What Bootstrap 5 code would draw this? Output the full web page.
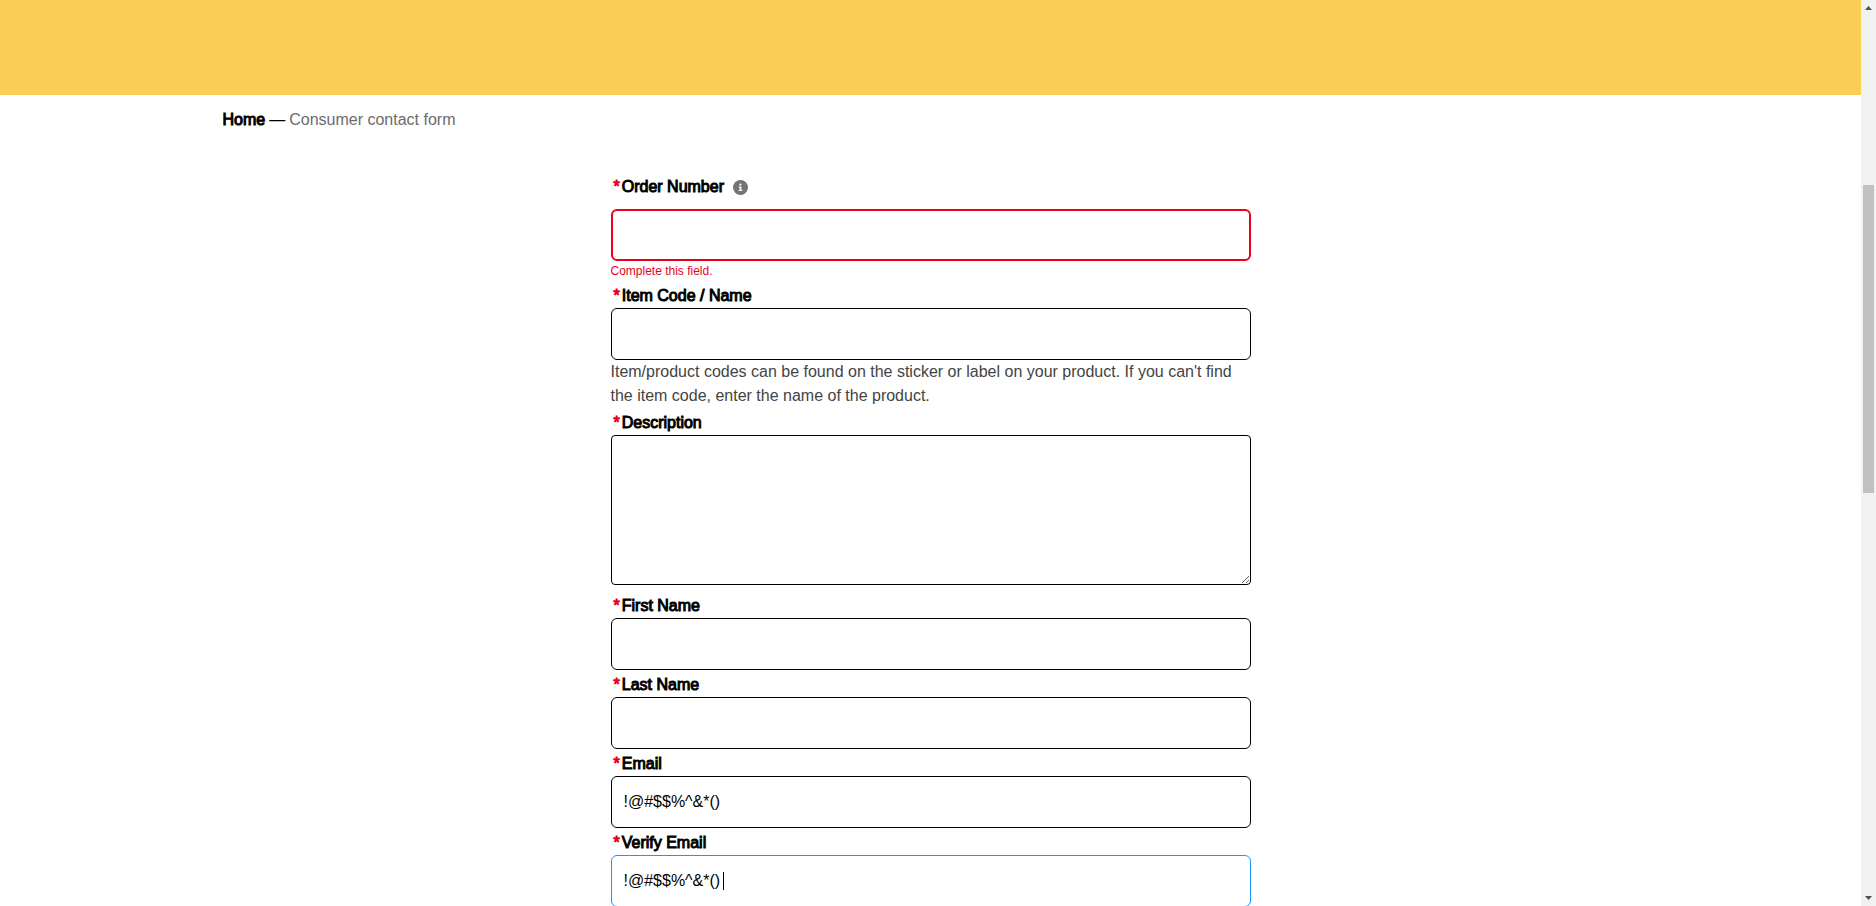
<!DOCTYPE html>
<html lang="en">
<head>
<meta charset="utf-8">
<meta name="viewport" content="width=device-width, initial-scale=1">
<title>Consumer contact form</title>
<link href="https://cdn.jsdelivr.net/npm/bootstrap@5.3.0/dist/css/bootstrap.min.css" rel="stylesheet">
<style>
  body { font-family: "Liberation Sans", Arial, sans-serif; font-size: 16px; line-height: 24px; color: #000; background: #fff; }
  .banner { height: 95px; background: #facd55; }
  .crumbs { max-width: 1416px; padding-top: 13px; }
  .crumbs .breadcrumb { --bs-breadcrumb-divider: "—"; --bs-breadcrumb-item-padding-x: 4px; --bs-breadcrumb-divider-color: #000; --bs-breadcrumb-item-active-color: #6b6b6b; --bs-breadcrumb-margin-bottom: 0; }
  .crumbs a { color: #000; }
  .strong-text { -webkit-text-stroke: 1px currentColor; }
  .contact-form { max-width: 640px; padding-top: 43px; }
  .field { margin-bottom: 3px; }
  .field-tall { margin-bottom: 9px; }
  .req { color: #ea001e; margin: 0 2px 0 3px; }
  .field .form-control { height: 52px; padding: 0 12px; border: 1px solid #000; border-radius: 6px; color: #000; font-size: 16px; background: #fff; box-shadow: none; }
  .field .form-control.is-invalid { border: 2px solid #ea001e; margin-top: 10px; }
  .field .form-control.current { border-color: #1b96ff; }
  .field textarea.form-control { height: 150px; padding: 12px; border-radius: 4px; }
  .error-note { color: #ea001e; font-size: 12px; line-height: 20px; }
  .help-note { color: #444; }
  .info-btn { width: 15px; height: 15px; margin-left: 9px; }
  .caret { left: 112px; top: 17px; width: 1px; height: 18px; background: #000; }
  .scroll-rail { width: 15px; background: #f1f1f1; padding: 6px 2px; }
  .scroll-thumb { background: #c1c1c1; flex: 308 0 0; }
  .rail-above { flex: 175 0 0; }
  .rail-below { flex: 403 0 0; }
</style>
</head>
<body>
<div class="d-flex vh-100 overflow-hidden">
  <main class="flex-grow-1 overflow-hidden">
    <header class="banner"></header>
    <nav class="crumbs mx-auto" aria-label="Breadcrumb">
      <ol class="breadcrumb">
        <li class="breadcrumb-item"><a class="text-decoration-none strong-text" href="#">Home</a></li>
        <li class="breadcrumb-item active" aria-current="page">Consumer contact form</li>
      </ol>
    </nav>
    <form class="contact-form mx-auto" novalidate>
      <div class="field">
        <div class="d-flex align-items-center">
          <label class="d-flex" for="order"><span class="req strong-text">*</span><span class="strong-text">Order Number</span></label>
          <button class="info-btn btn p-0 border-0 d-flex" type="button" aria-label="Help">
            <svg width="15" height="15" viewBox="0 0 15 15" aria-hidden="true"><circle cx="7.5" cy="7.5" r="7.5" fill="#747474"/><circle cx="7.4" cy="4.6" r="1.1" fill="#fff"/><path d="M5.7 6.5h2.7v3.4h1v1H5.6v-1h1V7.5h-.9z" fill="#fff"/></svg>
          </button>
        </div>
        <input class="form-control is-invalid" id="order" type="text" aria-describedby="order-error">
        <div class="error-note" id="order-error">Complete this field.</div>
      </div>
      <div class="field">
        <label class="d-flex" for="item"><span class="req strong-text">*</span><span class="strong-text">Item Code / Name</span></label>
        <input class="form-control" id="item" type="text" aria-describedby="item-help">
        <div class="help-note" id="item-help">Item/product codes can be found on the sticker or label on your product. If you can't find the item code, enter the name of the product.</div>
      </div>
      <div class="field field-tall">
        <label class="d-flex" for="description"><span class="req strong-text">*</span><span class="strong-text">Description</span></label>
        <textarea class="form-control d-block" id="description"></textarea>
      </div>
      <div class="field">
        <label class="d-flex" for="first"><span class="req strong-text">*</span><span class="strong-text">First Name</span></label>
        <input class="form-control" id="first" type="text">
      </div>
      <div class="field">
        <label class="d-flex" for="last"><span class="req strong-text">*</span><span class="strong-text">Last Name</span></label>
        <input class="form-control" id="last" type="text">
      </div>
      <div class="field">
        <label class="d-flex" for="email"><span class="req strong-text">*</span><span class="strong-text">Email</span></label>
        <input class="form-control" id="email" type="email" value="!@#$$%^&amp;*()">
      </div>
      <div class="field">
        <label class="d-flex" for="verify"><span class="req strong-text">*</span><span class="strong-text">Verify Email</span></label>
        <div class="position-relative">
          <input class="form-control current" id="verify" type="email" value="!@#$$%^&amp;*()">
          <span class="caret position-absolute"></span>
        </div>
      </div>
    </form>
  </main>
  <div class="scroll-rail d-flex flex-column flex-shrink-0" aria-hidden="true">
    <svg class="mx-auto" width="7" height="4" viewBox="0 0 7 4"><path d="M0 4 3.5 0 7 4z" fill="#505050"/></svg>
    <div class="rail-above"></div>
    <div class="scroll-thumb"></div>
    <div class="rail-below"></div>
    <svg class="mx-auto" width="7" height="4" viewBox="0 0 7 4"><path d="M0 0h7L3.5 4z" fill="#505050"/></svg>
  </div>
</div>
<script src="https://cdn.jsdelivr.net/npm/bootstrap@5.3.0/dist/js/bootstrap.bundle.min.js"></script>
</body>
</html>
